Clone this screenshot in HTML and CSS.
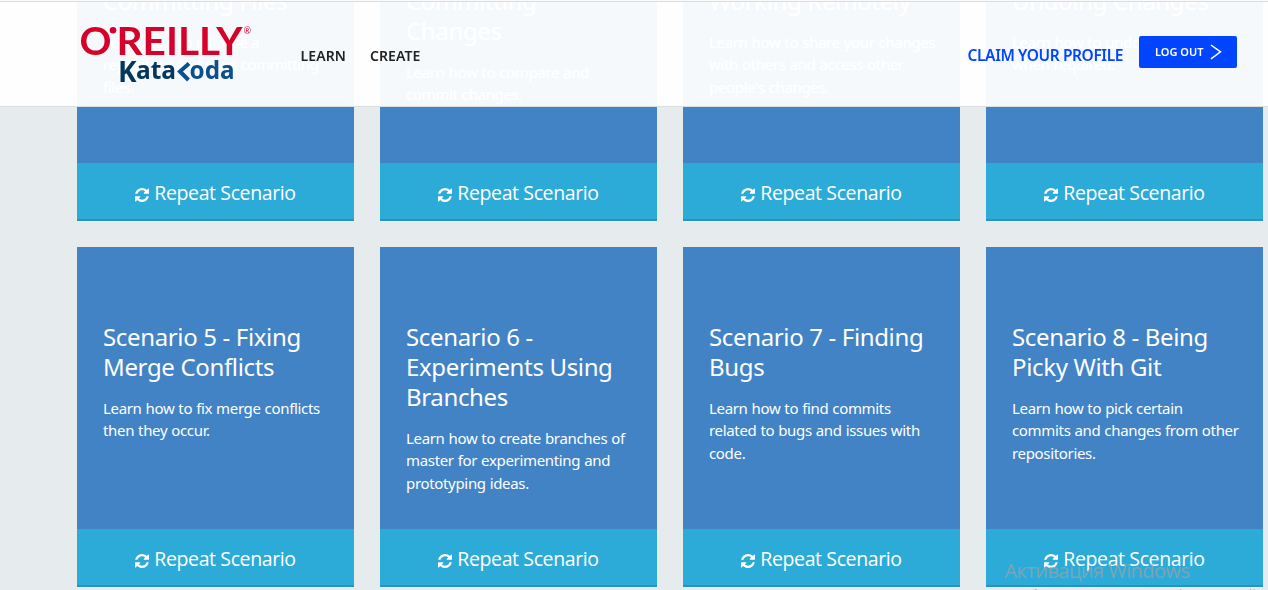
FILE: index.html
```html
<!DOCTYPE html>
<html lang="en">
<head>
<meta charset="utf-8">
<title>Katacoda</title>
<link rel="stylesheet" href="styles.css">
</head>
<body>
<svg class="defs" width="0" height="0"><defs><symbol id="refresh" viewBox="0 0 1536 1536"><path fill="currentColor" d="M1511 928q0 5-1 7-64 268-268 434.500T764 1536q-146 0-282.500-55T238 1324l-129 129q-19 19-45 19t-45-19-19-45V960q0-26 19-45t45-19h448q26 0 45 19t19 45-19 45l-137 137q71 66 161 102t187 36q134 0 250-65t186-179q11-17 53-117 8-23 30-23h192q13 0 22.500 9.500t9.500 22.500zm25-800v448q0 26-19 45t-45 19h-448q-26 0-45-19t-19-45 19-45l138-138Q969 256 768 256q-134 0-250 65T332 500q-11 17-53 117-8 23-30 23H50q-13 0-22.500-9.500T18 608v-7q65-268 270-434.500T768 0q146 0 284 55.500T1297 212l130-129q19-19 45-19t45 19 19 45z"/></symbol></defs></svg>
<header class="header">
  <svg class="logo" width="174" height="62" viewBox="78 24 174 62">
    <g class="oreilly">
      <text x="79.500" y="54.500" textLength="32" lengthAdjust="spacingAndGlyphs">O</text>
      <circle cx="113" cy="30.200" r="3.300"/>
      <text x="116.500" y="54.500" textLength="126" lengthAdjust="spacingAndGlyphs">REILLY</text>
    </g>
    <text class="reg" x="243.500" y="34">®</text>
    <g class="kata">
      <text class="k" x="118" y="81.500" textLength="19">K</text>
      <text x="136" y="79.300" textLength="40" lengthAdjust="spacingAndGlyphs">ata</text>
    </g>
    <g class="koda">
      <path d="M189 63.500 180 71.500 188.500 80"/>
      <text x="189.500" y="79.300" textLength="45" lengthAdjust="spacingAndGlyphs">oda</text>
    </g>
  </svg>
  <nav class="nav"><a>LEARN</a><a>CREATE</a></nav>
  <a class="claim">CLAIM YOUR PROFILE</a>
  <a class="logout"><span>LOG OUT</span><svg width="12" height="16" viewBox="0 0 12 16"><path d="M1 1 10.500 7.800 1 14.800"/></svg></a>
</header>
<main class="grid">
  <article class="card"><div class="body"><h2>Scenario 1 -<br>Committing Files</h2><p>Learn how to initalise a<br>repository and start committing<br>files.</p></div><a class="repeat"><svg><use href="#refresh"/></svg><span>Repeat Scenario</span></a></article>
  <article class="card"><div class="body"><h2>Scenario 2 -<br>Committing<br>Changes</h2><p>Learn how to compare and<br>commit changes.</p></div><a class="repeat"><svg><use href="#refresh"/></svg><span>Repeat Scenario</span></a></article>
  <article class="card"><div class="body"><h2>Scenario 3 -<br>Working Remotely</h2><p>Learn how to share your changes<br>with others and access other<br>people's changes.</p></div><a class="repeat"><svg><use href="#refresh"/></svg><span>Repeat Scenario</span></a></article>
  <article class="card"><div class="body"><h2>Scenario 4 -<br>Undoing Changes</h2><p>Learn how to undo changes<br>when required.</p></div><a class="repeat"><svg><use href="#refresh"/></svg><span>Repeat Scenario</span></a></article>
  <article class="card"><div class="body"><h2>Scenario 5 - Fixing<br>Merge Conflicts</h2><p>Learn how to fix merge conflicts<br>then they occur.</p></div><a class="repeat"><svg><use href="#refresh"/></svg><span>Repeat Scenario</span></a></article>
  <article class="card"><div class="body"><h2>Scenario 6 -<br>Experiments Using<br>Branches</h2><p>Learn how to create branches of<br>master for experimenting and<br>prototyping ideas.</p></div><a class="repeat"><svg><use href="#refresh"/></svg><span>Repeat Scenario</span></a></article>
  <article class="card"><div class="body"><h2>Scenario 7 - Finding<br>Bugs</h2><p>Learn how to find commits<br>related to bugs and issues with<br>code.</p></div><a class="repeat"><svg><use href="#refresh"/></svg><span>Repeat Scenario</span></a></article>
  <article class="card"><div class="body"><h2>Scenario 8 - Being<br>Picky With Git</h2><p>Learn how to pick certain<br>commits and changes from other<br>repositories.</p></div><a class="repeat"><svg><use href="#refresh"/></svg><span>Repeat Scenario</span></a></article>
</main>
<div class="activation"><div>Активация Windows</div><small>Чтобы активировать Windows, перейдите в</small></div>
</body>
</html>
```

FILE: styles.css
```css
* { box-sizing: border-box; }
html, body { margin: 0; height: 590px; overflow: hidden; }
body { background: #e6ebed; font-family: "Noto Sans", "Open Sans", sans-serif; color: #fff; }
.defs { position: absolute; }

.header {
  position: fixed; inset: 0 0 auto; z-index: 2;
  height: 107px; padding: 2px 31px 0 78px;
  display: flex; align-items: flex-start;
  background: linear-gradient(#fafafa 0 1px, #ddd 1px 2px, rgba(255,255,255,.95) 2px);
  border-bottom: 1px solid #dcdfe1; background-clip: padding-box;
}
.logo { margin-top: 22px; flex: none; }
.oreilly { fill: #d6002a; font: 700 38px Lato, sans-serif; }
.reg { fill: #d6002a; font: 9px Lato, sans-serif; }
.kata { fill: #05375c; font: 700 25px "Noto Sans", sans-serif; }
.koda { fill: #0b4f8c; font: 700 25px "Noto Sans", sans-serif; }
.k { font-size: 28px; }
.koda path { fill: none; stroke: #0b4f8c; stroke-width: 4; }

.nav { display: flex; gap: 24px; margin: 44px 0 0 48.500px; font-size: 14px; line-height: 20px; font-weight: 600; color: #222; letter-spacing: .1px; }
.claim { margin: 42px 16px 0 auto; font-size: 15.500px; line-height: 22px; font-weight: 600; color: #0245ff; letter-spacing: -.4px; }
.logout { width: 98px; height: 32px; margin-top: 34px; padding: 0 15px 0 16px; display: flex; align-items: center; justify-content: space-between; background: #0245ff; border-radius: 2px; font-size: 11px; line-height: 16px; font-weight: 600; letter-spacing: 0; }
.logout span { margin-top: -1px; }
.logout svg { fill: none; stroke: #fff; stroke-width: 1.500; }

.grid { display: grid; grid-template-columns: repeat(4, 277px); gap: 26px; margin: -119px 0 0 77px; }
.card { height: 340px; display: flex; flex-direction: column; background: #4283c6; }
.body { flex: 1; padding: 75px 0 0 26px; white-space: nowrap; }
h2 { margin: 0 0 14.500px; font-size: 24px; line-height: 30px; font-weight: 400; letter-spacing: -.35px; }
p { margin: 0; font-size: 15px; line-height: 22.500px; letter-spacing: -.33px; word-spacing: .4px; }
.repeat { height: 58px; padding-top: 3px; border-bottom: 2px solid #2895b8; background: #2dabd8; display: flex; align-items: center; justify-content: center; gap: 5px; font: 19.500px "Open Sans", sans-serif; letter-spacing: -.38px; }
.repeat svg { width: 14px; height: 14px; margin-top: 4px; }

.activation { position: fixed; left: 1005px; top: 557px; z-index: 3; color: rgba(160,163,165,.7); font: 20px/27px "Open Sans", sans-serif; letter-spacing: -.55px; white-space: nowrap; }
.activation small { display: block; font-size: 14px; line-height: 22px; letter-spacing: -.1px; }
```
